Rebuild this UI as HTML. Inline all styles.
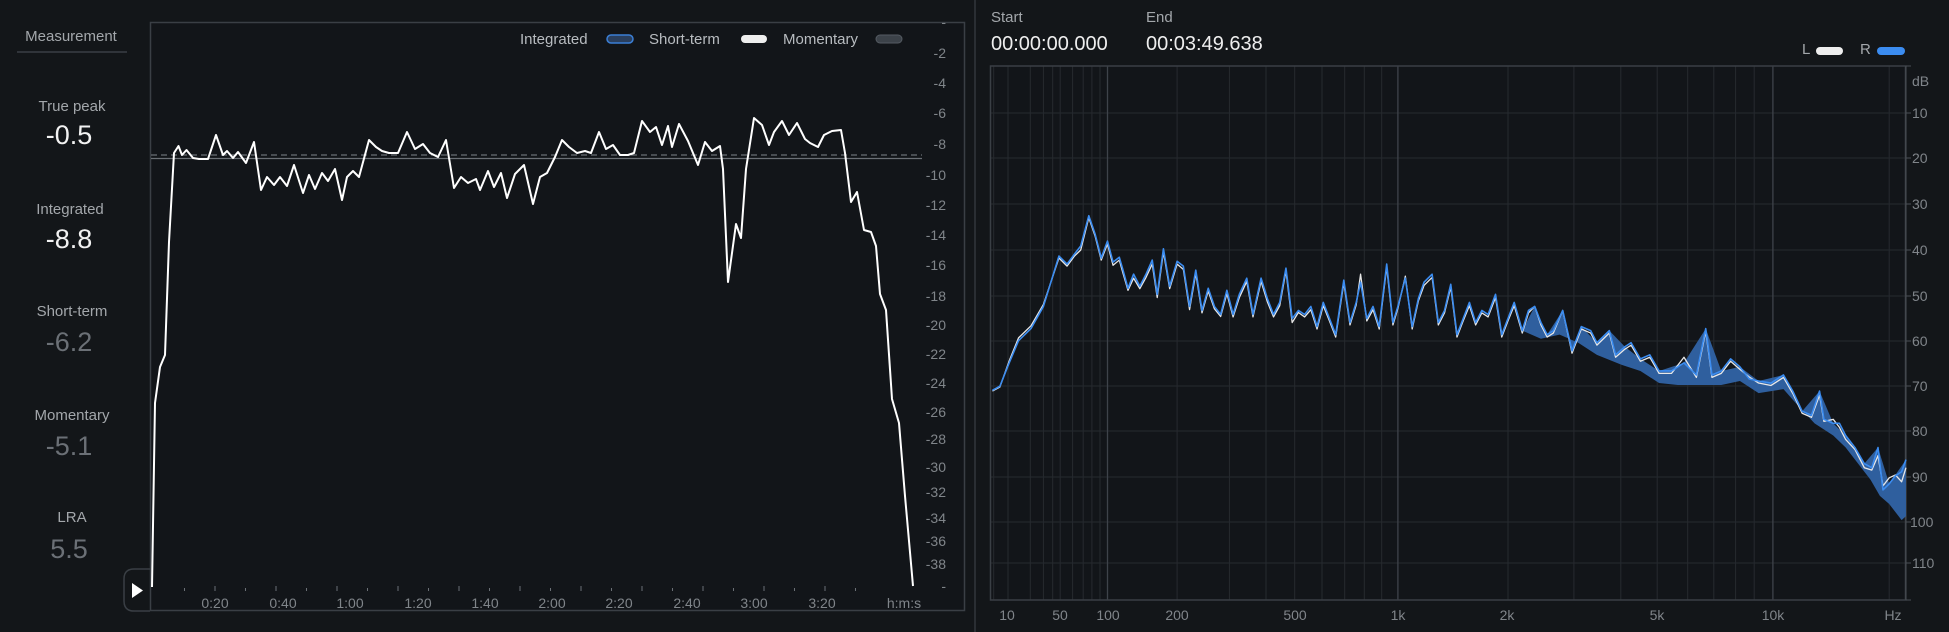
<!DOCTYPE html>
<html><head><meta charset="utf-8"><style>
html,body{margin:0;padding:0;background:#131619;}
body{width:1949px;height:632px;overflow:hidden;position:relative;font-family:"Liberation Sans",sans-serif;}
svg{position:absolute;left:0;top:0;}
text{font-family:"Liberation Sans",sans-serif;}
</style></head><body>
<svg width="1949" height="632" viewBox="0 0 1949 632" xmlns="http://www.w3.org/2000/svg">
<rect width="1949" height="632" fill="#131619"/>
<line x1="975" y1="0" x2="975" y2="632" stroke="#2a2e33" stroke-width="2"/>

<g fill="#a3a7ab" font-size="15" text-anchor="middle">
<text x="71" y="41">Measurement</text>
<line x1="17" y1="52" x2="127" y2="52" stroke="#3a3f45" stroke-width="1.5"/>
<text x="72" y="111">True peak</text>
<text x="70" y="214">Integrated</text>
<text x="72" y="316">Short-term</text>
<text x="72" y="420">Momentary</text>
<text x="72" y="522">LRA</text>
</g>
<g font-size="27" text-anchor="middle">
<text x="69" y="144" fill="#f2f2f2">-0.5</text>
<text x="69" y="248" fill="#f2f2f2">-8.8</text>
<text x="69" y="351" fill="#6b7076">-6.2</text>
<text x="69" y="455" fill="#6b7076">-5.1</text>
<text x="69" y="558" fill="#6b7076">5.5</text>
</g>

<rect x="150.5" y="22.5" width="814" height="588" fill="#121519" stroke="#3a3f45" stroke-width="1.5"/>
<path d="M150 569 H134 Q124 569 124 579 V601 Q124 611 134 611 H150" fill="none" stroke="#3a3f45" stroke-width="1.5"/>
<path d="M132 583 L143 590.5 L132 598 Z" fill="#ffffff"/>

<g font-size="15" fill="#b8bcc0">
<text x="520" y="44">Integrated</text>
<rect x="607" y="35" width="26" height="8" rx="4" fill="#2a3f5e" stroke="#3b7fd6" stroke-width="1.5"/>
<text x="649" y="44">Short-term</text>
<rect x="741" y="35" width="26" height="8" rx="4" fill="#eeeeee"/>
<text x="783" y="44">Momentary</text>
<rect x="876" y="35" width="26" height="8" rx="4" fill="#3c4249" stroke="#555b62"/>
</g>

<g font-size="14" fill="#80858a" text-anchor="end">
<text x="946" y="27">-</text>
<text x="946" y="58">-2</text><text x="946" y="88">-4</text><text x="946" y="118">-6</text>
<text x="946" y="149">-8</text><text x="946" y="180">-10</text><text x="946" y="210">-12</text>
<text x="946" y="240">-14</text><text x="946" y="270">-16</text><text x="946" y="301">-18</text>
<text x="946" y="330">-20</text><text x="946" y="359">-22</text><text x="946" y="388">-24</text>
<text x="946" y="417">-26</text><text x="946" y="444">-28</text><text x="946" y="472">-30</text>
<text x="946" y="497">-32</text><text x="946" y="523">-34</text><text x="946" y="546">-36</text>
<text x="946" y="569">-38</text><text x="946" y="591">-</text>
</g>

<g stroke="#6b7076" stroke-width="1">
<line x1="184.5" y1="588" x2="184.5" y2="591"/><line x1="215" y1="586" x2="215" y2="591"/>
<line x1="245.5" y1="588" x2="245.5" y2="591"/><line x1="276" y1="586" x2="276" y2="591"/>
<line x1="306.5" y1="588" x2="306.5" y2="591"/><line x1="337" y1="586" x2="337" y2="591"/>
<line x1="367.5" y1="588" x2="367.5" y2="591"/><line x1="398" y1="586" x2="398" y2="591"/>
<line x1="428.5" y1="588" x2="428.5" y2="591"/><line x1="459" y1="586" x2="459" y2="591"/>
<line x1="489.5" y1="588" x2="489.5" y2="591"/><line x1="520" y1="586" x2="520" y2="591"/>
<line x1="550.5" y1="588" x2="550.5" y2="591"/><line x1="581" y1="586" x2="581" y2="591"/>
<line x1="611.5" y1="588" x2="611.5" y2="591"/><line x1="642" y1="586" x2="642" y2="591"/>
<line x1="672.5" y1="588" x2="672.5" y2="591"/><line x1="703" y1="586" x2="703" y2="591"/>
<line x1="733.5" y1="588" x2="733.5" y2="591"/><line x1="764" y1="586" x2="764" y2="591"/>
<line x1="794.5" y1="588" x2="794.5" y2="591"/><line x1="825" y1="586" x2="825" y2="591"/>
<line x1="855.5" y1="588" x2="855.5" y2="591"/>
</g>
<g font-size="14" fill="#80858a" text-anchor="middle">
<text x="215" y="608">0:20</text><text x="283" y="608">0:40</text><text x="350" y="608">1:00</text>
<text x="418" y="608">1:20</text><text x="485" y="608">1:40</text><text x="552" y="608">2:00</text>
<text x="619" y="608">2:20</text><text x="687" y="608">2:40</text><text x="754" y="608">3:00</text>
<text x="822" y="608">3:20</text><text x="904" y="608">h:m:s</text>
</g>

<line x1="151" y1="155" x2="922" y2="155" stroke="#6a6f75" stroke-width="1.2" stroke-dasharray="6 4"/>
<line x1="151" y1="158.5" x2="922" y2="158.5" stroke="#6a6f75" stroke-width="1.2"/>

<polyline fill="none" stroke="#ffffff" stroke-width="2" stroke-linejoin="round" points="152,587 155,403 160,367 165,355 169,242 174,153 178.5,146 182,155 186.5,150 193,158 199,159 208,159 216,135 223,155 227,151 233,158 238,152 246,163 254,142 261,190 267,177 274,185 280,177 287,186 294,165 303,193 309,175 315,189 322,173 328,181 335,169 342,200 347,177 353,171 359,177 369,140 376,147 382,151 389,153 398,153 407,132 415,149 423,144 430,153 438,157 446,140 454,188 461,177 468,183 476,179 480,190 488,171 494,187 501,173 507,198 515,174 524,165 533,204 540,177 547,173 555,157 562,140 569,147 577,153 585,151 591,153 599,132 606,149 613,145 620,155 628,155 634,153 642,121 650,132 656,127 662,145 668,126 672,147 679,124 688,141 698,165 705,142 712,151 720,146 723,169 728,282 736,224 741,238 746,169 754,118 762,125 769,145 774,132 782,121 789,135 797,123 805,139 810,143 818,147 824,135 832,131 841,130 845,153 851,202 857,192 864,230 871,232 876,246 880,294 886,310 892,399 899,423 905,496 913,586"/>

<g font-size="15" fill="#a3a7ab">
<text x="991" y="22">Start</text>
<text x="1146" y="22">End</text>
<text x="1802" y="54">L</text>
<text x="1860" y="54">R</text>
</g>
<g font-size="20" fill="#eeeeee">
<text x="991" y="50">00:00:00.000</text>
<text x="1146" y="50">00:03:49.638</text>
</g>
<rect x="1816" y="47" width="27" height="8" rx="4" fill="#eeeeee"/>
<rect x="1877" y="47" width="28" height="8" rx="4" fill="#3b8cf0"/>

<rect x="990.5" y="66" width="915" height="534" fill="#121519"/>
<g stroke="#262a2f" stroke-width="1">
<line x1="991" y1="113" x2="1906" y2="113"/><line x1="991" y1="158" x2="1906" y2="158"/>
<line x1="991" y1="204" x2="1906" y2="204"/><line x1="991" y1="250" x2="1906" y2="250"/>
<line x1="991" y1="296" x2="1906" y2="296"/><line x1="991" y1="341" x2="1906" y2="341"/>
<line x1="991" y1="386" x2="1906" y2="386"/><line x1="991" y1="431" x2="1906" y2="431"/>
<line x1="991" y1="477" x2="1906" y2="477"/><line x1="991" y1="522" x2="1906" y2="522"/>
<line x1="991" y1="563" x2="1906" y2="563"/>
<line x1="993.7" y1="66" x2="993.7" y2="600"/><line x1="1008" y1="66" x2="1008" y2="600"/>
<line x1="1030.3" y1="66" x2="1030.3" y2="600"/><line x1="1043.4" y1="66" x2="1043.4" y2="600"/>
<line x1="1052.7" y1="66" x2="1052.7" y2="600"/><line x1="1060.2" y1="66" x2="1060.2" y2="600"/>
<line x1="1072.6" y1="66" x2="1072.6" y2="600"/><line x1="1083.2" y1="66" x2="1083.2" y2="600"/>
<line x1="1091.9" y1="66" x2="1091.9" y2="600"/><line x1="1100" y1="66" x2="1100" y2="600"/>
<line x1="1177.1" y1="66" x2="1177.1" y2="600"/><line x1="1229.4" y1="66" x2="1229.4" y2="600"/>
<line x1="1266" y1="66" x2="1266" y2="600"/><line x1="1294.7" y1="66" x2="1294.7" y2="600"/>
<line x1="1322" y1="66" x2="1322" y2="600"/><line x1="1344.7" y1="66" x2="1344.7" y2="600"/>
<line x1="1364.3" y1="66" x2="1364.3" y2="600"/><line x1="1381.7" y1="66" x2="1381.7" y2="600"/>
<line x1="1508" y1="66" x2="1508" y2="600"/><line x1="1573.9" y1="66" x2="1573.9" y2="600"/>
<line x1="1620.8" y1="66" x2="1620.8" y2="600"/><line x1="1657.2" y1="66" x2="1657.2" y2="600"/>
<line x1="1687.7" y1="66" x2="1687.7" y2="600"/><line x1="1713.8" y1="66" x2="1713.8" y2="600"/>
<line x1="1735.6" y1="66" x2="1735.6" y2="600"/><line x1="1754.2" y1="66" x2="1754.2" y2="600"/>
<line x1="1889.2" y1="66" x2="1889.2" y2="600"/>
</g>
<g stroke="#3e434a" stroke-width="1.3">
<line x1="1107.5" y1="66" x2="1107.5" y2="600"/><line x1="1397.9" y1="66" x2="1397.9" y2="600"/><line x1="1772.9" y1="66" x2="1772.9" y2="600"/>
</g>
<rect x="990.5" y="66" width="915" height="534" fill="none" stroke="#3a3f45" stroke-width="1.5"/>
<line x1="1906" y1="66" x2="1906" y2="600" stroke="#4a4f55" stroke-width="1"/>
<g stroke="#4a4f55"><line x1="1906" y1="66" x2="1911" y2="66"/><line x1="1906" y1="113" x2="1911" y2="113"/><line x1="1906" y1="158" x2="1911" y2="158"/><line x1="1906" y1="204" x2="1911" y2="204"/><line x1="1906" y1="250" x2="1911" y2="250"/><line x1="1906" y1="296" x2="1911" y2="296"/><line x1="1906" y1="341" x2="1911" y2="341"/><line x1="1906" y1="386" x2="1911" y2="386"/><line x1="1906" y1="431" x2="1911" y2="431"/><line x1="1906" y1="477" x2="1911" y2="477"/><line x1="1906" y1="522" x2="1911" y2="522"/><line x1="1906" y1="563" x2="1911" y2="563"/><line x1="1906" y1="600" x2="1911" y2="600"/></g>

<g font-size="14" fill="#80858a">
<text x="1912" y="86">dB</text>
<text x="1912" y="118">10</text><text x="1912" y="163">20</text><text x="1912" y="209">30</text>
<text x="1912" y="255">40</text><text x="1912" y="301">50</text><text x="1912" y="346">60</text>
<text x="1912" y="391">70</text><text x="1912" y="436">80</text><text x="1912" y="482">90</text>
<text x="1910" y="527">100</text><text x="1912" y="568">110</text>
</g>
<g font-size="14" fill="#80858a" text-anchor="middle">
<text x="1007" y="620">10</text><text x="1060" y="620">50</text><text x="1108" y="620">100</text>
<text x="1177" y="620">200</text><text x="1295" y="620">500</text><text x="1398" y="620">1k</text>
<text x="1507" y="620">2k</text><text x="1657" y="620">5k</text><text x="1773" y="620">10k</text>
<text x="1893" y="620">Hz</text>
</g>

<g transform="translate(975,0) scale(0.6219,0.4032)">
<polygon fill="#2f5f9e" points="880,820 900,760 920,830 945,770 960,870 975,810 1000,850 1020,820 1045,860 1070,890 1100,920 1140,900 1175,815 1200,920 1230,910 1260,945 1300,930 1330,1020 1358,970 1380,1050 1400,1080 1430,1150 1452,1110 1470,1200 1497,1140 1497,1280 1490,1290 1470,1250 1455,1230 1440,1190 1420,1150 1400,1110 1380,1080 1350,1050 1320,1000 1300,965 1260,975 1230,945 1200,955 1170,955 1130,955 1100,950 1070,920 1040,905 1000,880 970,850 940,830 910,840"/>
<polyline fill="none" stroke="#e8e8e8" stroke-width="1.3" vector-effect="non-scaling-stroke" stroke-linejoin="round" points="28,970 40,960 55,895 70,838 90,808 110,755 135,640 148,660 160,635 170,620 183,540 193,585 203,645 213,605 222,658 232,645 238,678 246,720 255,690 265,716 275,688 285,655 293,738 303,625 313,716 325,655 335,668 345,768 355,678 365,776 375,722 385,766 395,785 405,728 415,786 425,738 437,698 447,786 460,698 470,748 480,786 490,758 500,672 510,800 520,775 530,786 540,768 550,816 560,758 570,796 580,836 593,702 603,806 613,756 620,680 630,796 640,768 650,816 662,662 672,806 680,765 692,685 703,816 713,746 722,708 735,688 745,806 755,776 765,712 775,836 785,796 795,758 805,806 815,776 825,786 837,738 847,836 857,796 867,758 880,826 890,776 900,760 910,806 920,836 930,826 945,770 960,876 975,816 990,826 1000,856 1020,826 1030,886 1045,866 1055,856 1070,896 1085,886 1100,926 1120,926 1140,886 1160,936 1175,822 1185,936 1200,926 1215,896 1230,916 1245,935 1260,950 1280,956 1300,936 1315,976 1330,1025 1345,1035 1358,980 1365,1045 1380,1040 1390,1060 1400,1090 1415,1115 1430,1160 1442,1166 1452,1130 1460,1205 1470,1185 1480,1178 1490,1195 1497,1160"/>
<polyline fill="none" stroke="#3b8cf0" stroke-width="1.6" vector-effect="non-scaling-stroke" stroke-linejoin="round" points="28,968 40,958 55,900 70,845 90,815 110,760 135,635 148,655 160,630 170,610 183,535 193,580 203,640 213,598 222,650 232,638 238,670 246,715 255,680 265,710 275,680 285,645 293,730 303,617 313,710 325,648 335,660 345,760 355,670 365,770 375,715 385,760 395,780 405,720 415,780 425,730 437,690 447,780 460,690 470,740 480,780 490,750 500,665 510,790 520,770 530,780 540,760 550,810 560,750 570,790 580,830 593,695 603,800 613,750 620,700 630,790 640,760 650,810 662,655 672,800 680,760 692,690 703,810 713,740 722,700 735,680 745,800 755,770 765,705 775,830 785,790 795,750 805,800 815,770 825,780 837,730 847,830 857,790 867,750 880,820 890,770 900,760 910,800 920,830 930,820 945,770 960,870 975,810 990,820 1000,850 1020,820 1030,880 1045,860 1055,850 1070,890 1085,880 1100,920 1120,920 1140,900 1160,930 1175,815 1185,930 1200,920 1215,890 1230,910 1245,940 1260,945 1280,950 1300,930 1315,970 1330,1020 1345,1030 1358,970 1365,1040 1380,1050 1390,1050 1400,1080 1415,1110 1430,1150 1442,1160 1452,1110 1460,1215 1470,1200 1480,1180 1490,1170 1497,1140"/>
</g>
</svg>
</body></html>
